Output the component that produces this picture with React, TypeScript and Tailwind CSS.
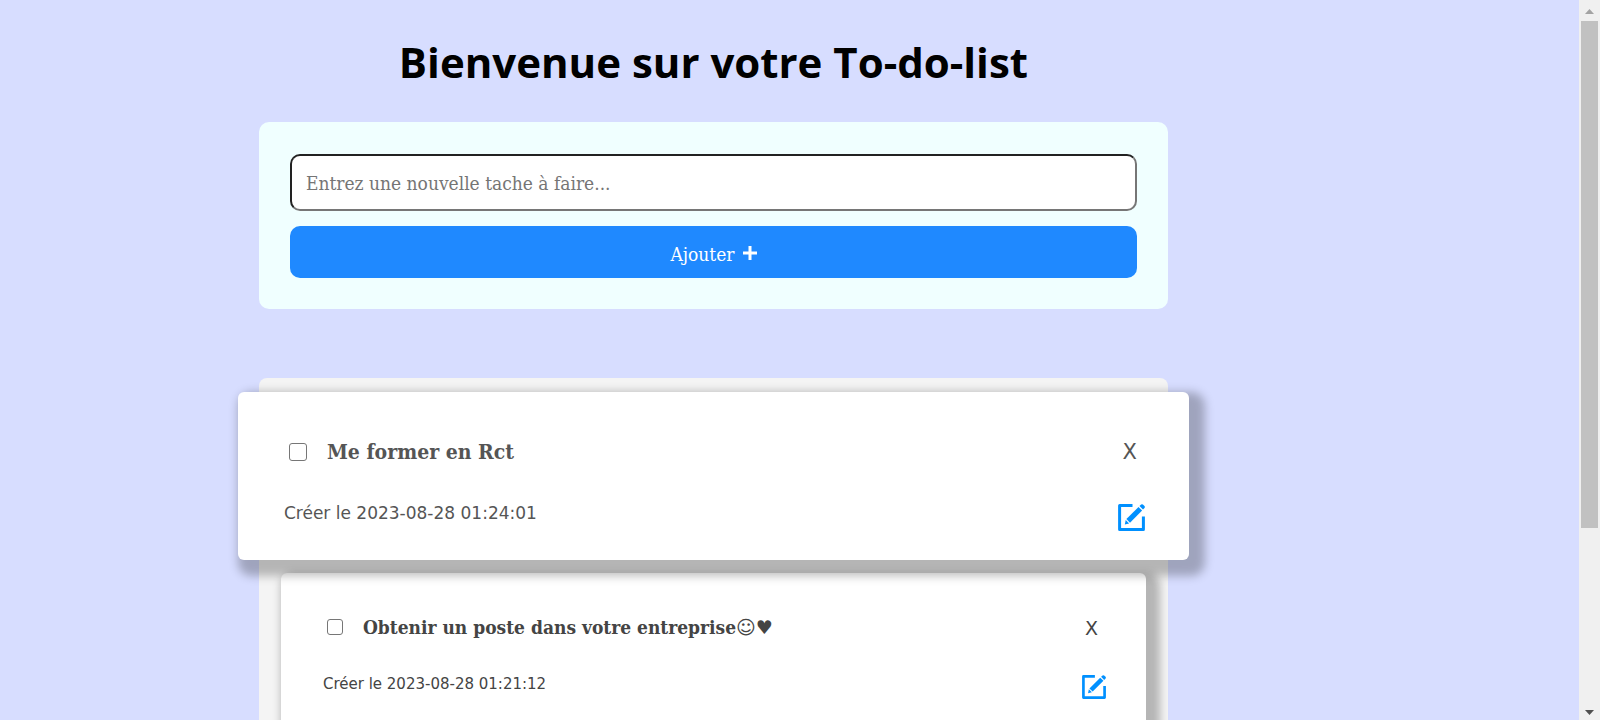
import { useState } from "react";

const serif = "font-['DejaVu_Serif_Condensed','DejaVu_Serif',serif]";
const verdana = "font-['DejaVu_Sans',sans-serif]";

type Task = { id: number; title: string; symbols?: string; date: string };

const initialTasks: Task[] = [
  { id: 1, title: "Me former en Rct", date: "2023-08-28 01:24:01" },
  { id: 2, title: "Obtenir un poste dans votre entreprise", symbols: "☺♥", date: "2023-08-28 01:21:12" },
];

function EditIcon({ className }: { className: string }) {
  return (
    <svg viewBox="0 0 27 27" className={className} fill="none" aria-hidden="true">
      <path d="M14.500 1.600H1.600V25.400H25.400V12.500" stroke="#0090ff" strokeWidth="3" strokeLinejoin="round" />
      <path d="M20.500 3l3.600 3.600L12 18.700 8.400 15.100z" fill="#0090ff" />
      <path d="M7.700 16l3.400 3.400L6.800 20.400z" fill="#0090ff" />
      <path d="M21.500 2.100l1.600-1.600q.9-.7 1.800 0l1.600 1.600q.7.9 0 1.800l-1.500 1.600z" fill="#0090ff" />
    </svg>
  );
}

function TaskCard({ task, active, onRemove }: { task: Task; active: boolean; onRemove: () => void }) {
  const checkId = `task-${task.id}`;
  return (
    <li
      className={
        active
          ? "relative z-10 -mx-[21px] flex h-[168px] flex-col rounded-md bg-white pt-[42px] pr-11 pl-[46px] text-[#555] shadow-[8px_8px_10px_8px_rgba(0,0,0,0.26)]"
          : "mx-[22px] flex h-[153px] flex-col rounded-md bg-white pt-[38px] pr-10 pl-[42px] text-[#444] shadow-[7px_7px_9px_7px_rgba(0,0,0,0.26)]"
      }
    >
      <div className={active ? "flex h-9 items-center pr-2 pl-[5px]" : "flex h-8 items-center pr-2 pl-1"}>
        <input
          id={checkId}
          type="checkbox"
          className={
            active
              ? "size-[18px] shrink-0 appearance-none rounded-[3px] border border-[#767676] bg-white checked:bg-[#1f89ff]"
              : "size-4 shrink-0 appearance-none rounded-[3px] border border-[#767676] bg-white checked:bg-[#1f89ff]"
          }
        />
        <label
          htmlFor={checkId}
          className={`${serif} flex-1 pl-5 font-bold ${active ? "text-[21px]" : "text-[19px]"}`}
        >
          {task.title}
          {task.symbols && <span className="font-['DejaVu_Sans'] font-normal">{task.symbols}</span>}
        </label>
        <button
          type="button"
          onClick={onRemove}
          aria-label="Supprimer"
          className={`${verdana} pt-0.5 ${active ? "text-[21px]" : "text-[19px]"}`}
        >
          X
        </button>
      </div>
      <div className={active ? "flex items-start justify-between pt-[34px]" : "flex items-start justify-between pt-8"}>
        <p className={`${verdana} leading-[18px] ${active ? "text-[17px]" : "text-[15px]"}`}>Créer le {task.date}</p>
        <button type="button" aria-label="Modifier">
          <EditIcon className={active ? "size-[27px]" : "size-6"} />
        </button>
      </div>
    </li>
  );
}

function ScrollRail() {
  return (
    <div className="flex w-[21px] shrink-0 flex-col items-center bg-[#f0f0f0]" aria-hidden="true">
      <svg viewBox="0 0 21 21" className="h-[21px] w-[21px] shrink-0">
        <path d="M6 14l4.500-5 4.500 5z" fill="#a3a3a3" />
      </svg>
      <div className="h-[507px] w-[17px] bg-[#c1c1c1]" />
      <svg viewBox="0 0 21 21" className="mt-auto h-[21px] w-[21px] shrink-0">
        <path d="M6 11l4.500 5 4.500-5z" fill="#505050" />
      </svg>
    </div>
  );
}

export default function App() {
  const [tasks, setTasks] = useState(initialTasks);
  const [draft, setDraft] = useState("");

  const addTask = (event: React.FormEvent) => {
    event.preventDefault();
    if (!draft.trim()) return;
    const date = new Date().toISOString().slice(0, 19).replace("T", " ");
    setTasks([{ id: Date.now(), title: draft, date }, ...tasks]);
    setDraft("");
  };

  return (
    <div className="flex h-screen overflow-hidden bg-[#d7ddff]">
      <main className="min-w-0 flex-1">
        <div className="ml-[16.4%] w-full max-w-[909px]">
          <h1 className="pt-8 pb-[30px] text-center font-['Open_Sans','Noto_Sans',sans-serif] text-[42px] leading-[60px] font-bold text-black">
            Bienvenue sur votre To-do-list
          </h1>
          <form onSubmit={addTask} className="flex flex-col gap-[15px] rounded-[10px] bg-[#f0ffff] px-[31px] pt-8 pb-[31px]">
            <input
              type="text"
              aria-label="Nouvelle tache"
              value={draft}
              onChange={(e) => setDraft(e.target.value)}
              placeholder="Entrez une nouvelle tache à faire..."
              className={`${serif} h-[57px] w-full rounded-[10px] border-2 border-t-[#222] border-r-[#767676] border-b-[#767676] border-l-[#222] bg-white px-3.5 text-[19px] placeholder:text-[#757575]`}
            />
            <button
              type="submit"
              className={`${serif} flex h-[52px] items-center justify-center gap-2 rounded-[10px] bg-[#1f89ff] pt-1 text-[19px] text-white`}
            >
              Ajouter
              <svg viewBox="0 0 14 14" className="mb-0.5 size-3.5" aria-hidden="true">
                <path d="M7 0v14M0 7h14" stroke="currentColor" strokeWidth="3" />
              </svg>
            </button>
          </form>
          <ul className="mt-[69px] flex flex-col gap-[13px] rounded-[8px] bg-[#f4f4f4] pt-3.5 pb-6">
            {tasks.map((task, index) => (
              <TaskCard
                key={task.id}
                task={task}
                active={index === 0}
                onRemove={() => setTasks(tasks.filter((t) => t.id !== task.id))}
              />
            ))}
          </ul>
        </div>
      </main>
      <ScrollRail />
    </div>
  );
}
